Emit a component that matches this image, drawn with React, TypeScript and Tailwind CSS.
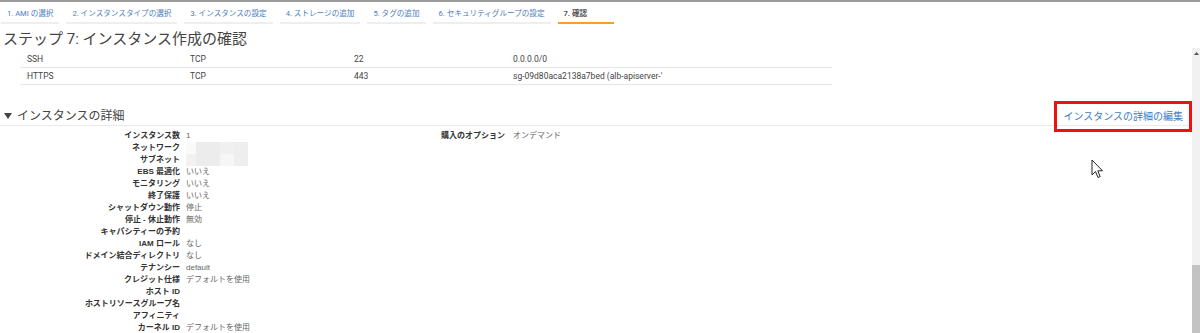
import { useState } from 'react';

interface Tab {
  label: string;
  active?: boolean;
}

interface DetailRow {
  label: string;
  value?: string;
  masked?: boolean;
}

const tabs: Tab[] = [
  { label: '1. AMI の選択' },
  { label: '2. インスタンスタイプの選択' },
  { label: '3. インスタンスの設定' },
  { label: '4. ストレージの追加' },
  { label: '5. タグの追加' },
  { label: '6. セキュリティグループの設定' },
  { label: '7. 確認', active: true },
];

const rules = [
  ['SSH', 'TCP', '22', '0.0.0.0/0'],
  ['HTTPS', 'TCP', '443', "sg-09d80aca2138a7bed (alb-apiserver-'"],
];

const details: DetailRow[] = [
  { label: 'インスタンス数', value: '1' },
  { label: 'ネットワーク', masked: true },
  { label: 'サブネット', masked: true },
  { label: 'EBS 最適化', value: 'いいえ' },
  { label: 'モニタリング', value: 'いいえ' },
  { label: '終了保護', value: 'いいえ' },
  { label: 'シャットダウン動作', value: '停止' },
  { label: '停止 - 休止動作', value: '無効' },
  { label: 'キャパシティーの予約' },
  { label: 'IAM ロール', value: 'なし' },
  { label: 'ドメイン結合ディレクトリ', value: 'なし' },
  { label: 'テナンシー', value: 'default' },
  { label: 'クレジット仕様', value: 'デフォルトを使用' },
  { label: 'ホスト ID' },
  { label: 'ホストリソースグループ名' },
  { label: 'アフィニティ' },
  { label: 'カーネル ID', value: 'デフォルトを使用' },
];

function Masked({ top }: { top?: boolean }) {
  // blurred-out value in the screenshot
  return (
    <div className="flex h-[12px] w-[62px]">
      <div className={`w-[10px] ${top ? 'bg-[#fafafa]' : 'bg-[#f2f2f2]'}`} />
      <div className="w-[24px] bg-[#ececec]" />
      <div className={`w-[14px] ${top ? 'bg-[#f0f0f0]' : 'bg-[#f6f6f6]'}`} />
      <div className="w-[14px] bg-[#eeeeee]" />
    </div>
  );
}

export default function App() {
  const [open] = useState(true);

  return (
    <div className="relative h-[333px] w-[1200px] overflow-hidden bg-white font-['Roboto','Noto_Sans_CJK_JP',sans-serif] text-[#444]">
      <div className="h-[2px] bg-[#9b9b9b]" />

      {/* wizard tabs */}
      <div className="flex gap-[7px] pl-[1px] pt-[3px]">
        {tabs.map((tab) => (
          <div
            key={tab.label}
            className={`flex h-[19px] items-center border-b-2 px-[6px] text-[7.6px] ${
              tab.active
                ? 'min-w-[56px] border-[#f7a21e] font-bold text-[#555]'
                : 'border-[#eeeeee] text-[#4a80c0]'
            }`}
          >
            {tab.label}
          </div>
        ))}
      </div>

      <h1 className="pl-[3px] pt-[3px] text-[15px] leading-[24px] text-[#444]">
        ステップ 7: インスタンス作成の確認
      </h1>

      {/* security group rules */}
      <div className="ml-[20px] w-[812px]">
        {rules.map((row) => (
          <div
            key={row[0]}
            className="grid h-[17px] grid-cols-[163px_164px_159px_1fr] items-center border-b border-[#e6e6e6] pl-[7px] text-[8.5px] text-[#444]"
          >
            {row.map((cell, i) => (
              <span key={i}>{cell}</span>
            ))}
          </div>
        ))}
      </div>

      {/* instance details header */}
      <div className="mt-[16px] flex h-[25px] items-end justify-between border-b border-[#eaeaea] pr-[8px]">
        <div className="flex items-center gap-[5px] pb-[1px] pl-[4px] text-[12px] leading-[16px] text-[#444]">
          <svg width="8" height="6" viewBox="0 0 8 6" className={open ? '' : '-rotate-90'}>
            <path d="M0 0 L8 0 L4 6 Z" fill="#444" />
          </svg>
          インスタンスの詳細
        </div>
        <div className="mb-[-7px] flex h-[31px] items-center border-[3px] border-[#ee1111] px-[6px] text-[10px] text-[#3d7cc4]">
          インスタンスの詳細の編集
        </div>
      </div>

      {/* details */}
      <div className="flex pt-[4px] font-['Liberation_Sans','Noto_Sans_CJK_JP',sans-serif] text-[8px] leading-[12px]">
        <div className="w-[360px] flex-none">
          {details.map((row) => (
            <div key={row.label} className="flex h-[12px] items-center gap-[6px]">
              <div className="w-[180px] text-right font-bold text-[#333]">{row.label}</div>
              {row.masked ? (
                <Masked top={row.label === 'ネットワーク'} />
              ) : (
                <div className="text-[#666]">{row.value}</div>
              )}
            </div>
          ))}
        </div>
        <div className="flex h-[12px] items-center gap-[8px]">
          <div className="w-[145px] text-right font-bold text-[#333]">購入のオプション</div>
          <div className="text-[#666]">オンデマンド</div>
        </div>
      </div>

      {/* mouse cursor */}
      <svg
        className="absolute left-[1091px] top-[159px]"
        width="13"
        height="20"
        viewBox="0 0 13 20"
      >
        <path
          d="M1 1 L1 16 L4.5 12.5 L7 18.5 L9.2 17.6 L6.8 11.8 L11.5 11.8 Z"
          fill="#fff"
          stroke="#222"
          strokeWidth="1"
          strokeLinejoin="round"
        />
      </svg>

      {/* scrollbar */}
      <div className="absolute bottom-0 right-0 top-[48px] flex w-[8px] flex-col bg-[#f1f1f1]">
        <div className="flex h-[10px] items-center justify-center">
          <svg width="5" height="3" viewBox="0 0 5 3">
            <path d="M0 3 L2.5 0 L5 3 Z" fill="#555" />
          </svg>
        </div>
        <div className="flex-1" />
        <div className="h-[68px] bg-[#c3c3c3]" />
      </div>
    </div>
  );
}
